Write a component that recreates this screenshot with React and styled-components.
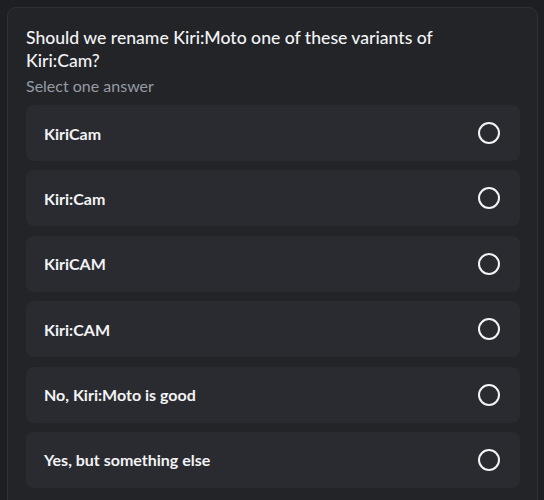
import React, { useState } from 'react';
import styled, { createGlobalStyle } from 'styled-components';

const options = [
    'KiriCam',
    'Kiri:Cam',
    'KiriCAM',
    'Kiri:CAM',
    'No, Kiri:Moto is good',
    'Yes, but something else',
];

const GlobalStyle = createGlobalStyle`
    html, body {
        margin: 0;
        padding: 0;
        background: #1e1f22;
        font-family: Lato, 'Noto Sans', sans-serif;
        overflow: hidden;
    }
`;

const App = () => {
    const [selected, setSelected] = useState(null);

    return (
        <>
            <GlobalStyle />
            <Page>
                <PollCard>
                    <Question>
                        Should we rename Kiri:Moto one of these variants of Kiri:Cam?
                    </Question>
                    <Hint>Select one answer</Hint>
                    <OptionList>
                        {options.map((label, i) => (
                            <Option key={label} onClick={() => setSelected(i)}>
                                <OptionLabel>{label}</OptionLabel>
                                <Radio $checked={selected === i} />
                            </Option>
                        ))}
                    </OptionList>
                </PollCard>
            </Page>
        </>
    );
};

export default App;

/* styles */
const Page = styled.div`
    padding: 7px 6px 0 7px;
    height: 500px;
    box-sizing: border-box;
`;

const PollCard = styled.div`
    background: #232428;
    border: 1px solid #303136;
    border-radius: 9px;
    padding: 18px 17px 40px 18px;
    width: 531px;
    box-sizing: border-box;
`;

const Question = styled.div`
    color: #f2f3f5;
    font-size: 17.6px;
    font-weight: 500;
    line-height: 23px;
    max-width: 440px;
`;

const Hint = styled.div`
    color: #949ba4;
    font-size: 16px;
    line-height: 20px;
    margin-top: 4px;
`;

const OptionList = styled.div`
    display: flex;
    flex-direction: column;
    gap: 9.4px;
    margin-top: 9px;
`;

const Option = styled.div`
    display: flex;
    align-items: center;
    justify-content: space-between;
    height: 56px;
    padding: 0 20px 0 18px;
    background: #2a2b30;
    border-radius: 8px;
    cursor: pointer;
`;

const OptionLabel = styled.span`
    color: #f2f3f5;
    font-size: 16px;
    font-weight: 700;
`;

const Radio = styled.span`
    width: 18px;
    height: 18px;
    border: 2px solid ${(p) => (p.$checked ? '#5865f2' : '#f2f3f5')};
    border-radius: 50%;
    flex-shrink: 0;
`;
